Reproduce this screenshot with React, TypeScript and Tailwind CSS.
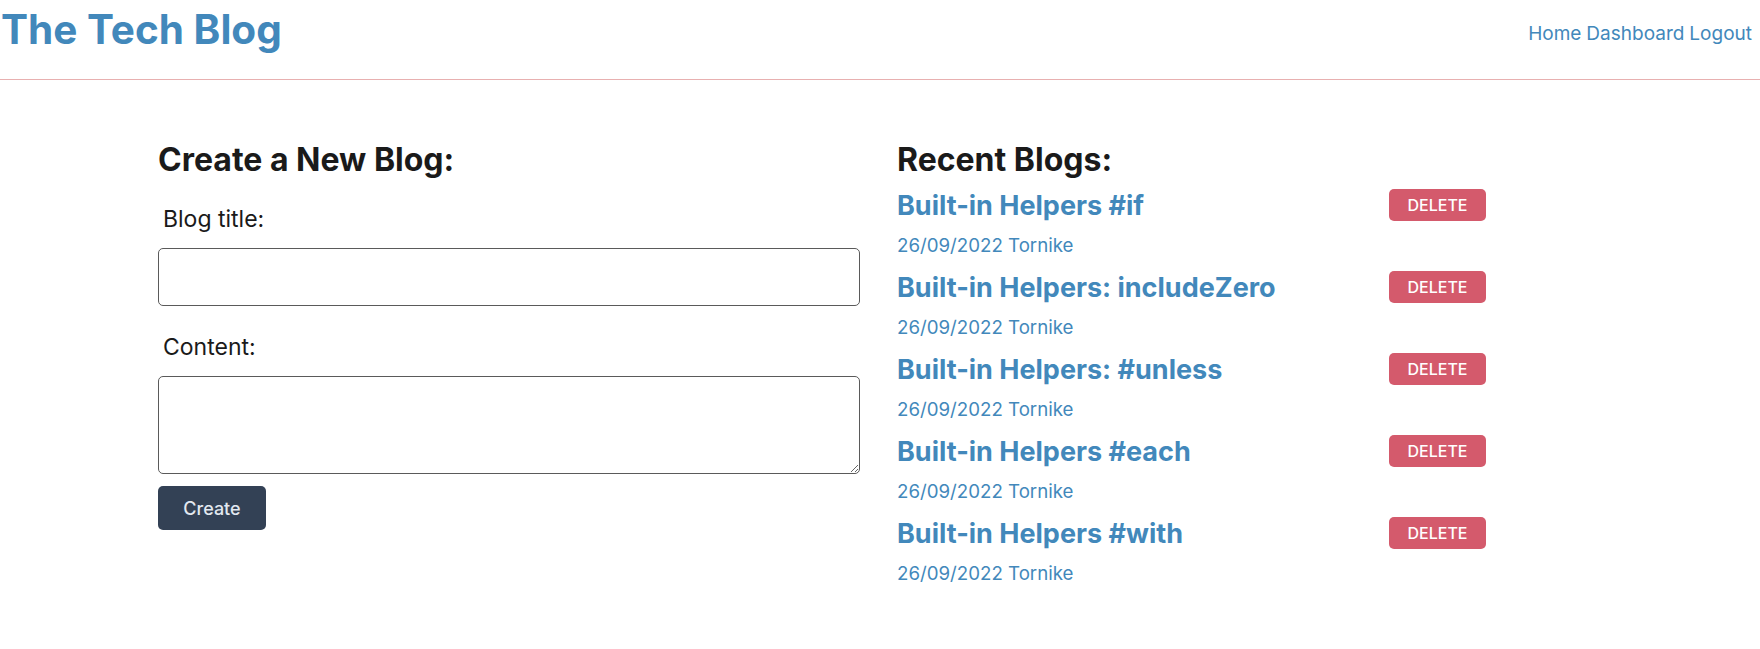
import React from "react";

const blogs = [
  "Built-in Helpers #if",
  "Built-in Helpers: includeZero",
  "Built-in Helpers: #unless",
  "Built-in Helpers #each",
  "Built-in Helpers #with",
];

export default function App() {
  return (
    <div className="min-h-[649px] bg-white font-['Inter',sans-serif] text-[#1a1a1a]">
      <header className="flex h-[80px] items-start justify-between border-b border-[#e8b0b0] pr-2">
        <h1 className="pl-px pt-[6px] text-[40.5px] font-bold leading-[48px] text-[#4288bb]">
          The Tech Blog
        </h1>
        <nav className="flex gap-[5px] pt-5 text-[19px] leading-[27px] text-[#4288bb]">
          <a href="#">Home</a>
          <a href="#">Dashboard</a>
          <a href="#">Logout</a>
        </nav>
      </header>

      <main className="flex pl-[158px] pt-[60px]">
        <section className="flex w-[702px] flex-col">
          <h2 className="text-[32px] font-bold leading-[40px]">Create a New Blog:</h2>
          <label className="mt-[24px] pl-[5px] text-[23px] leading-[30px]">Blog title:</label>
          <input
            type="text"
            className="mt-[14px] h-[58px] w-full rounded-[5px] border border-[#5a5a5a] px-3 outline-none"
          />
          <label className="mt-[26px] pl-[5px] text-[23px] leading-[30px]">Content:</label>
          <textarea className="mt-[14px] h-[98px] w-full rounded-[5px] border border-[#5a5a5a] px-3 py-2 outline-none" />
          <div className="mt-3">
            <button className="h-[44px] w-[108px] rounded-[5px] bg-[#334155] text-[18px] font-medium text-[#e2e8f0]">
              Create
            </button>
          </div>
        </section>

        <section className="ml-[37px] flex flex-col">
          <h2 className="text-[32px] font-bold leading-[40px]">Recent Blogs:</h2>
          <ul className="mt-[9px] flex flex-col gap-[13px]">
            {blogs.map((b) => (
              <li key={b} className="flex flex-col">
                <div className="flex w-[589px] items-start justify-between">
                  <a href="#" className="text-[27px] font-bold leading-[34px] text-[#4288bb]">
                    {b}
                  </a>
                  <button className="h-[32px] w-[97px] rounded-[5px] bg-[#d45a6c] text-[16px] font-medium text-white">
                    DELETE
                  </button>
                </div>
                <p className="mt-[11px] text-[18.7px] leading-[24px] text-[#4288bb]">
                  26/09/2022 Tornike
                </p>
              </li>
            ))}
          </ul>
        </section>
      </main>
    </div>
  );
}
